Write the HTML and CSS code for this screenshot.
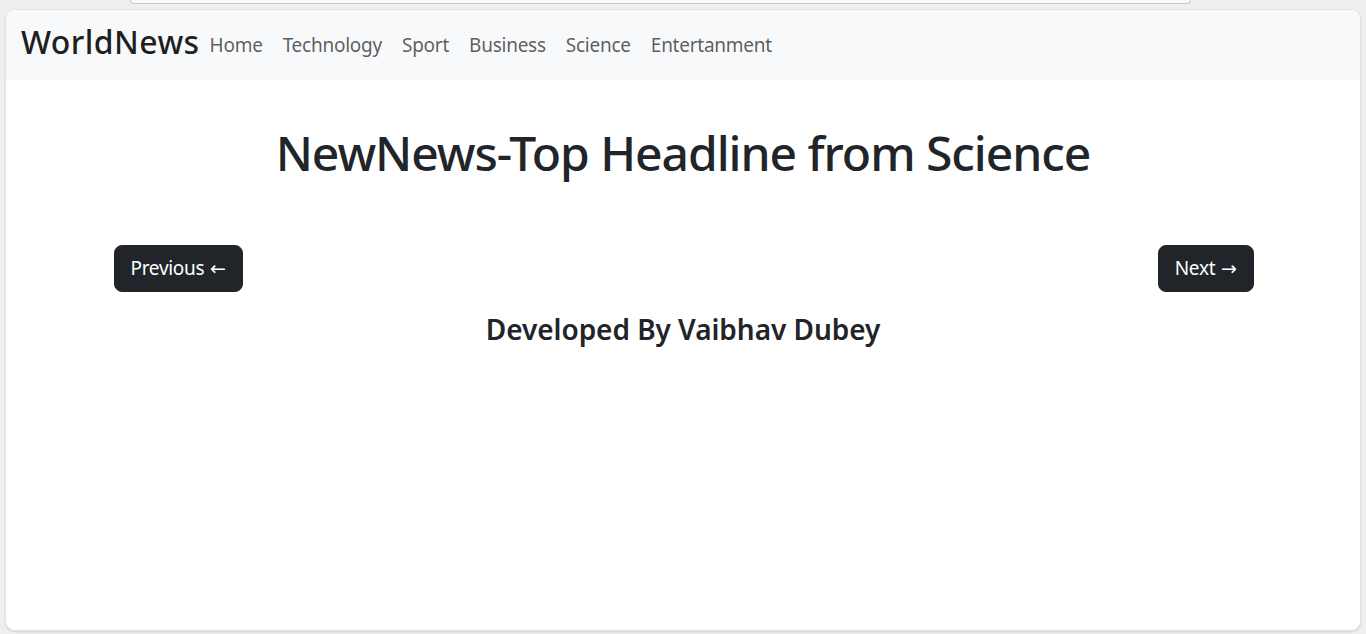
FILE: index.html
```html
<!DOCTYPE html>
<html lang="en">
<head>
<meta charset="utf-8">
<title>WorldNews</title>
<link rel="stylesheet" href="styles.css">
</head>
<body>
<div class="topbar"></div>
<div class="frame">
  <nav class="navbar">
    <a class="brand" href="#">WorldNews</a>
    <ul class="nav">
      <li><a href="#">Home</a></li>
      <li><a href="#">Technology</a></li>
      <li><a href="#">Sport</a></li>
      <li><a href="#">Business</a></li>
      <li><a href="#">Science</a></li>
      <li><a href="#">Entertanment</a></li>
    </ul>
  </nav>
  <main class="content">
    <h1 class="title">NewNews-Top Headline from Science</h1>
    <div class="pager">
      <button class="btn">Previous <span class="arrow">←</span></button>
      <button class="btn">Next <span class="arrow">→</span></button>
    </div>
    <h3 class="credit">Developed By Vaibhav Dubey</h3>
  </main>
</div>
</body>
</html>
```
FILE: styles.css
```css
* { box-sizing: border-box; }
html, body { margin: 0; padding: 0; }
body {
  background: #efefef;
  font-family: "Noto Sans", "Open Sans", sans-serif;
  color: #212529;
  height: 634px;
  overflow: hidden;
}
.topbar {
  height: 4px;
  margin: 0 0 0 130px;
  width: 1061px;
  background: #fafafa;
  border: 1px solid #c9c9c9;
  border-top: none;
  border-radius: 0 0 14px 14px;
}
.frame {
  margin: 5px 5px 0 5px;
  height: 622px;
  background: #fff;
  border: 1px solid #e2e2e2;
  border-radius: 10px;
  box-shadow: 0 1px 2px rgba(0,0,0,0.12);
  overflow: hidden;
}
.navbar {
  display: flex;
  align-items: center;
  height: 70px;
  background: #f8f9fa;
  padding: 0 15px;
}
.brand {
  font-size: 32px;
  font-weight: 500;
  color: rgba(0,0,0,0.88);
  text-decoration: none;
  letter-spacing: 0.4px;
  margin-right: 0;
  line-height: 1;
  padding-bottom: 6px;
}
.nav {
  display: flex;
  list-style: none;
  margin: 0;
  padding: 0;
}
.nav a {
  display: block;
  padding: 6px 10px;
  font-size: 19px;
  color: rgba(0,0,0,0.65);
  text-decoration: none;
  letter-spacing: -0.25px;
}
.content {
  display: flex;
  flex-direction: column;
  align-items: center;
}
.title {
  font-size: 48px;
  font-weight: 500;
  margin: 44px 0 0 0;
  line-height: 1.2;
  letter-spacing: -1.05px;
}
.pager {
  width: 1140px;
  display: flex;
  justify-content: space-between;
  margin: 63px 0 0 1px;
}
.btn {
  background: #212529;
  color: #fff;
  border: 1px solid #212529;
  border-radius: 8px;
  font-family: inherit;
  font-size: 19px;
  line-height: 1.5;
  padding: 8px 16px;
  height: 47px;
  letter-spacing: -0.3px;
}
.arrow { font-family: "DejaVu Sans", sans-serif; font-size: 19px; margin-left: 1px; }
.credit {
  font-size: 28px;
  font-weight: 600;
  margin: 21px 0 0 0;
  line-height: 1.2;
  letter-spacing: -0.05px;
}
```
